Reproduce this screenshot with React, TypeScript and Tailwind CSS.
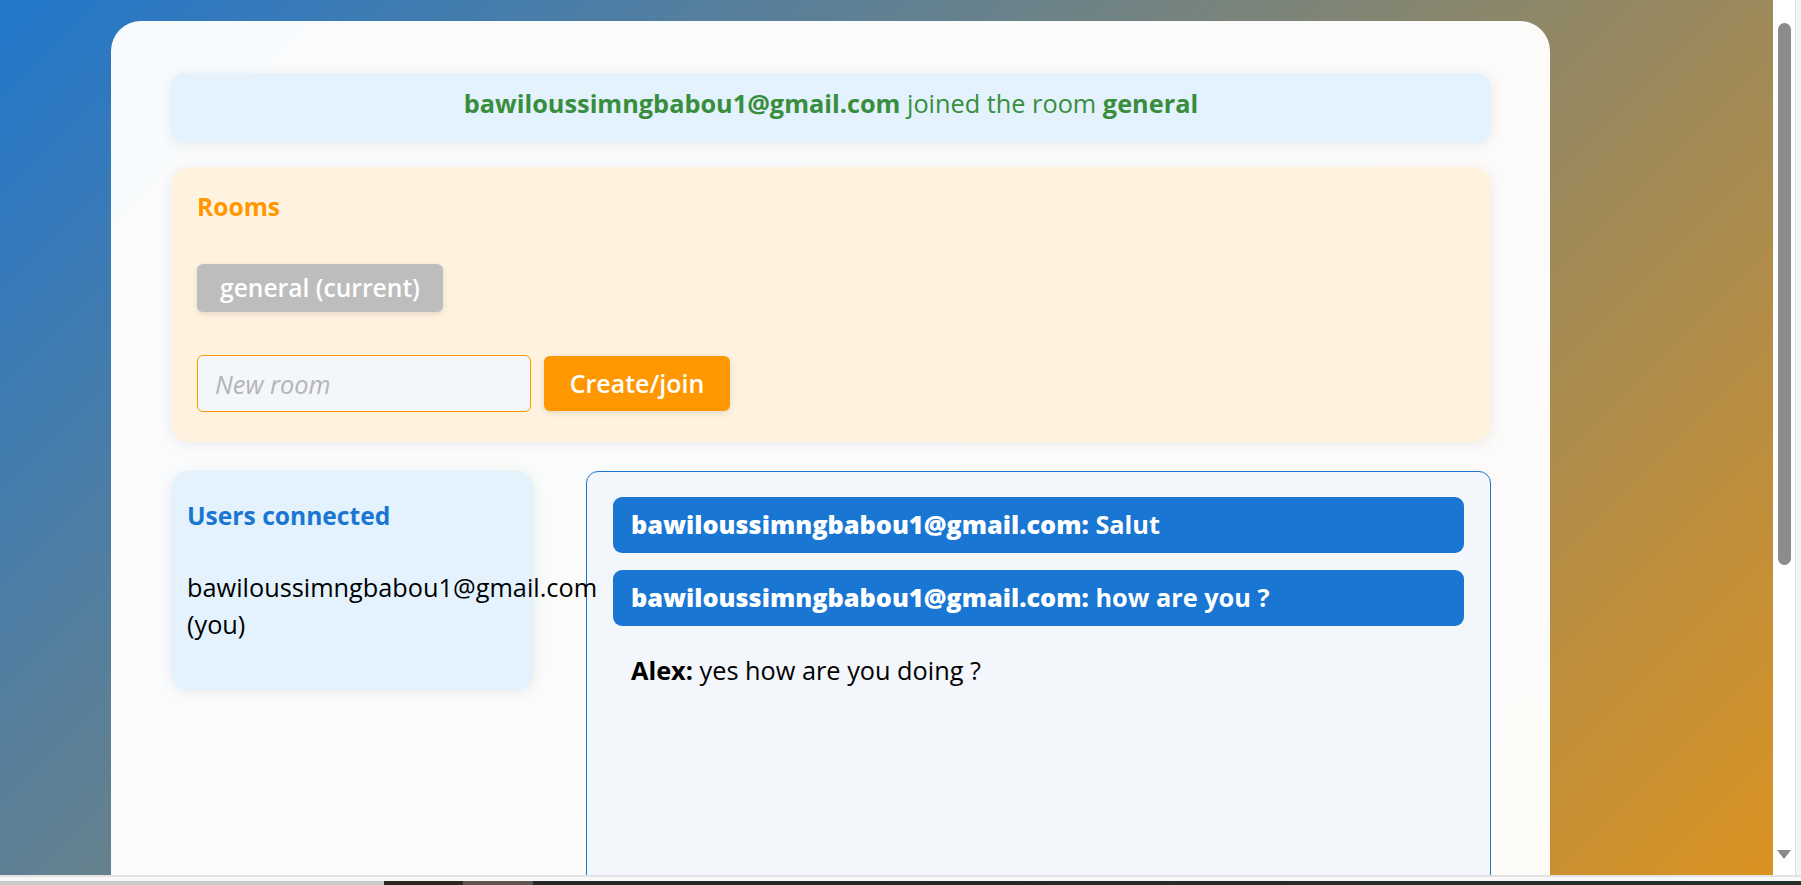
import React from 'react';

/**
 * Chat room screen: notification, rooms, users and message list
 */

const FONT = "font-['Open_Sans',sans-serif]";

const messages = [
  { user: 'bawiloussimngbabou1@gmail.com', text: 'Salut', mine: true },
  { user: 'bawiloussimngbabou1@gmail.com', text: 'how are you ?', mine: true },
  { user: 'Alex', text: 'yes how are you doing ?', mine: false },
];

export default function App() {
  return (
    <div className={`flex h-[885px] w-full flex-col overflow-hidden bg-[#f0f0f0] ${FONT}`}>
      <div className="flex h-[875px]">
        {/* Page */}
        <div className="h-full flex-1 overflow-hidden">
          <div className="min-h-[1400px] bg-[linear-gradient(135deg,#2277cc,#ff9800)] pl-[111px] pt-[21px]">
            <ChatCard />
          </div>
        </div>
        <FakeScrollbar />
      </div>
      <TaskbarStrip />
    </div>
  );
}

function ChatCard() {
  return (
    <div className="w-[1439px] rounded-[30px] bg-white/[0.97] pb-[60px] pl-[60px] pr-[59px] pt-[52px] text-[25.3px] text-black">
      <JoinNotice />
      <RoomsPanel />
      <div className="mt-[29px] flex items-start gap-[52px]">
        <UsersPanel />
        <MessageList />
      </div>
    </div>
  );
}

function JoinNotice() {
  return (
    <div className="flex h-[70px] items-center justify-center rounded-[14px] bg-[#e3f2fd] pb-[8px] text-[#388e3c] shadow-[0_2px_14px_rgba(0,0,0,0.07)]">
      <p>
        <span className="font-bold">bawiloussimngbabou1@gmail.com</span> joined the room{' '}
        <span className="font-bold">general</span>
      </p>
    </div>
  );
}

function RoomsPanel() {
  return (
    <div className="mt-[24px] rounded-[18px] bg-[#fff3e0] pb-[30px] pl-[26px] pt-[22px] shadow-[0_2px_14px_rgba(0,0,0,0.07)]">
      <h3 className="text-[24.6px] font-bold leading-[36px] text-[#ff9800]">Rooms</h3>
      <div className="mt-[39px] flex">
        <button className="h-[48px] rounded-[6px] bg-[#bdbdbd] px-[23px] text-[24.6px] font-semibold text-white shadow-[0_2px_6px_rgba(0,0,0,0.12)]">
          general (current)
        </button>
      </div>
      <div className="mt-[43px] flex items-center gap-[13px]">
        <input
          placeholder="New room"
          className="h-[57px] w-[334px] rounded-[6px] border border-[#ff9800] bg-[#f3f6fb] px-[17px] text-[25.3px] outline-none placeholder:italic placeholder:text-[#b5b5b5]"
        />
        <button className="h-[55px] w-[186px] rounded-[6px] bg-[#ff9800] text-[25px] font-semibold text-white shadow-[0_2px_6px_rgba(0,0,0,0.12)]">
          Create/join
        </button>
      </div>
    </div>
  );
}

function UsersPanel() {
  return (
    <div className="relative z-10 w-[363px] shrink-0 rounded-[18px] bg-[#e3f2fd] pb-[47px] pl-[16px] pr-[18px] pt-[27px] shadow-[0_2px_14px_rgba(0,0,0,0.07)]">
      <h3 className="text-[24.6px] font-bold leading-[36px] text-[#1976d2]">Users connected</h3>
      <p className="mt-[35px] leading-[37px]">bawiloussimngbabou1@gmail.com (you)</p>
    </div>
  );
}

function MessageList() {
  return (
    <div className="h-[520px] flex-1 rounded-[12px] border border-[#1976d2] bg-[#f3f6fb] px-[26px] pt-[25px]">
      <div className="flex flex-col gap-[17px]">
        {messages.map((m, i) => (
          <div
            key={i}
            className={
              m.mine
                ? 'flex h-[56px] items-center rounded-[9px] bg-[#1976d2] px-[18px] font-bold text-white'
                : 'flex h-[56px] items-center px-[18px] text-black'
            }
          >
            <span>
              <strong className={m.mine ? 'font-black' : 'font-bold'}>{m.user}:</strong> {m.text}
            </span>
          </div>
        ))}
      </div>
    </div>
  );
}

function FakeScrollbar() {
  return (
    <div className="flex h-full w-[28px] shrink-0">
      <div className="flex w-[22px] flex-col items-center bg-white pt-[23px]">
        <div className="h-[542px] w-[13px] rounded-full bg-[#8c8c8c]" />
        <div className="flex-1" />
        <svg width="14" height="9" viewBox="0 0 14 9" className="mb-[16px]">
          <path d="M0 0 H14 L7 9 Z" fill="#8a8a8a" />
        </svg>
      </div>
      <div className="w-[1px] bg-[#dedede]" />
      <div className="flex-1 bg-[#f4f4f4]" />
    </div>
  );
}

function TaskbarStrip() {
  return (
    <div className="flex h-[10px] flex-col">
      <div className="h-[2px] bg-[#e2e2e2]" />
      <div className="h-[4px] bg-[#f8f8f8]" />
      <div className="flex h-[4px]">
        <div className="w-[384px] bg-[#c9c9c9]" />
        <div className="w-[79px] bg-[#2e2621]" />
        <div className="w-[70px] bg-[#5f574f]" />
        <div className="flex-1 bg-[linear-gradient(90deg,#262626,#22302a)]" />
      </div>
    </div>
  );
}
